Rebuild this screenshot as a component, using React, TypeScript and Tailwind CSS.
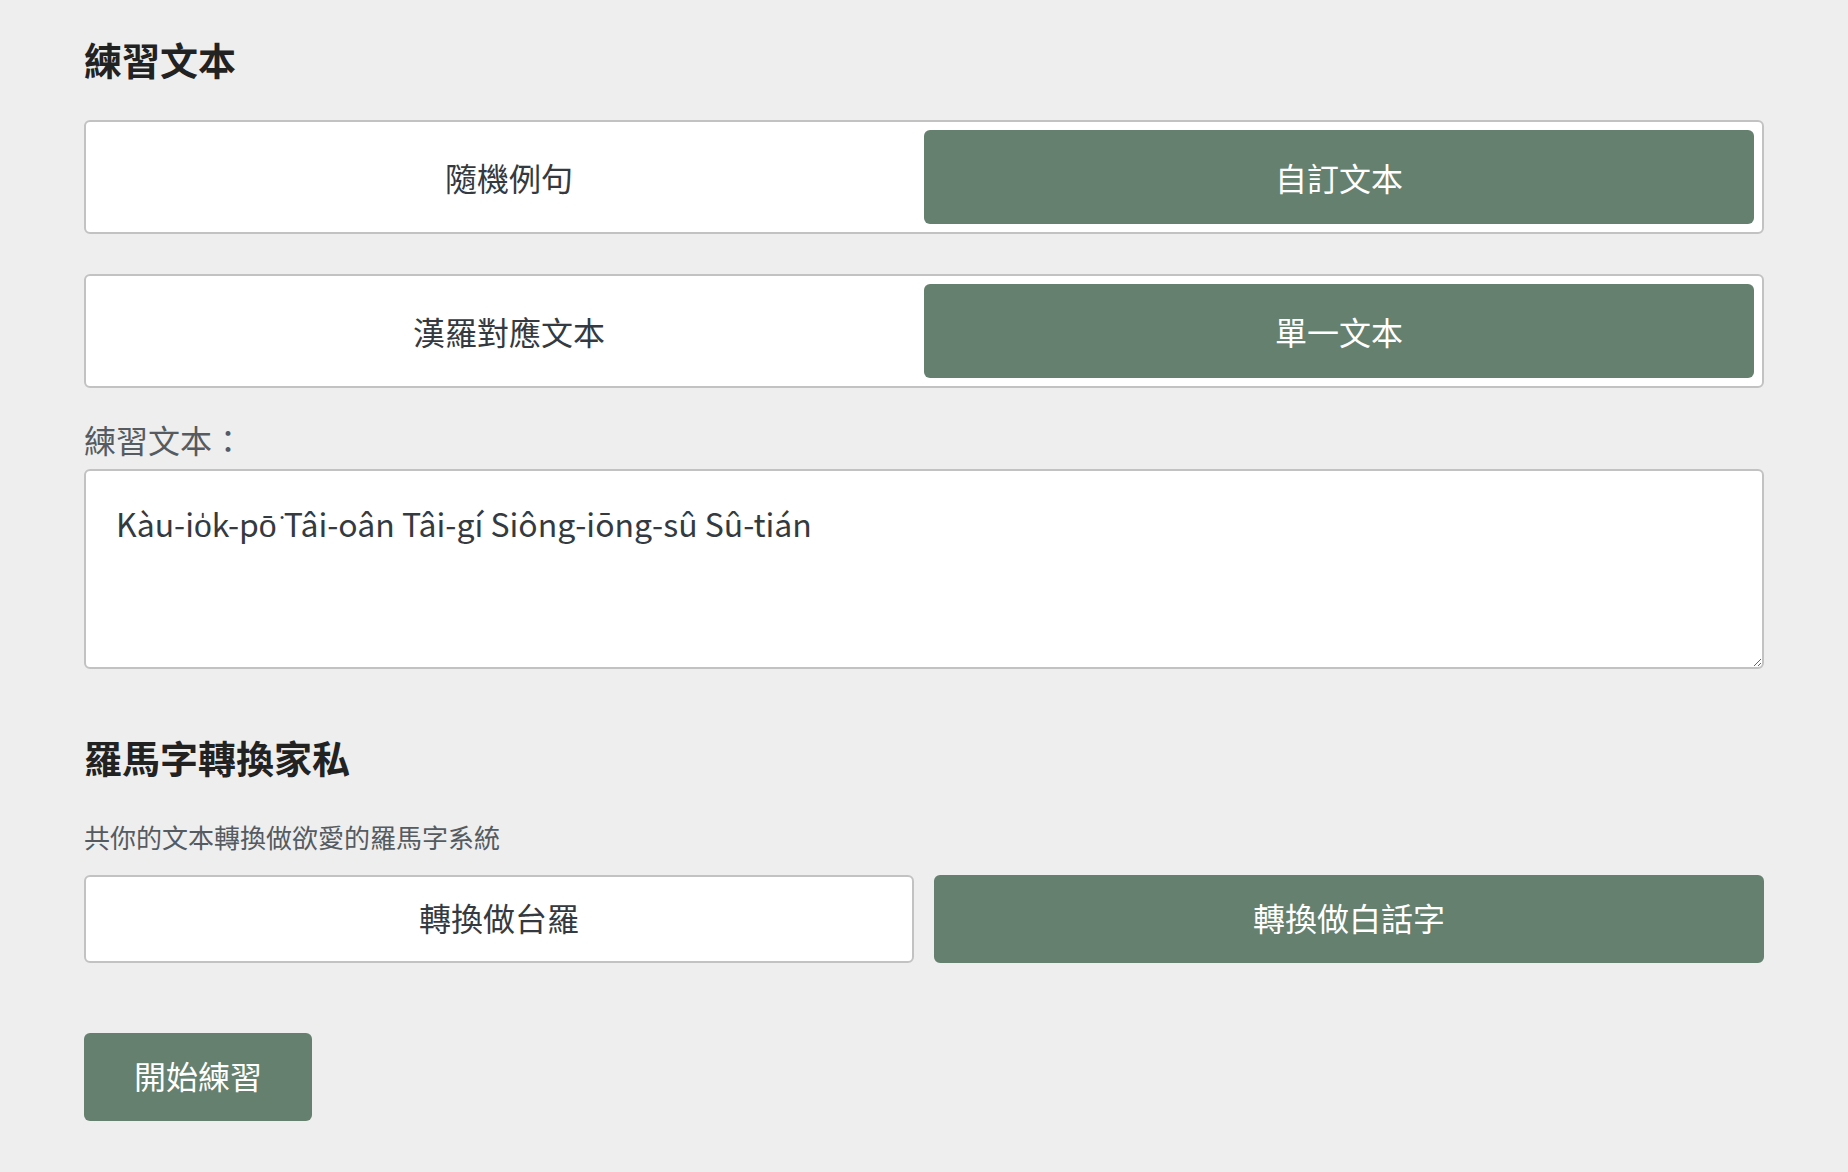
import { useState } from 'react';

const GREEN = 'bg-[#65806f] text-white';
const PLAIN = 'bg-white text-[#343a40]';

function Toggle({
  options,
  value,
  onChange,
}: {
  options: string[];
  value: number;
  onChange: (i: number) => void;
}) {
  return (
    <div className="flex rounded-[6px] border-2 border-[#c2c2c2] bg-white p-2">
      {options.map((label, i) => (
        <button
          key={label}
          type="button"
          onClick={() => onChange(i)}
          className={`flex h-[94px] flex-1 items-center justify-center rounded-[6px] text-[32px] leading-[48px] ${
            value === i ? GREEN : PLAIN
          }`}
        >
          {label}
        </button>
      ))}
    </div>
  );
}

export default function App() {
  const [source, setSource] = useState(1);
  const [mode, setMode] = useState(1);
  const [target, setTarget] = useState(1);

  return (
    <div className="min-h-screen bg-[#eeeeee] font-['Noto_Sans_CJK_TC',sans-serif]">
      <div className="px-[84px] pt-[35px] pb-12">
        <h2 className="text-[38px] leading-[48px] font-bold text-[#222222]">練習文本</h2>

        {/* Text source */}
        <div className="mt-[37px]">
          <Toggle options={['隨機例句', '自訂文本']} value={source} onChange={setSource} />
        </div>

        {/* Text mode */}
        <div className="mt-[40px]">
          <Toggle options={['漢羅對應文本', '單一文本']} value={mode} onChange={setMode} />
        </div>

        <label className="mt-[27px] block text-[32px] leading-[48px] text-[#555b61]">練習文本：</label>
        <textarea
          className="mt-[6px] block h-[200px] w-full rounded-[6px] border-2 border-[#c2c2c2] bg-white px-[30px] pt-[28px] pb-[30px] text-[32px] leading-[48px] text-[#343a40] outline-none"
          defaultValue="Kàu-io̍k-pō͘ Tâi-oân Tâi-gí Siông-iōng-sû Sû-tián"
        />

        <h2 className="mt-[64px] text-[38px] leading-[48px] font-bold text-[#222222]">羅馬字轉換家私</h2>
        <p className="mt-[36px] text-[26px] leading-[39px] text-[#555b61]">共你的文本轉換做欲愛的羅馬字系統</p>

        {/* Romanization target */}
        <div className="mt-[19px] grid grid-cols-2 gap-5">
          {['轉換做台羅', '轉換做白話字'].map((label, i) => (
            <button
              key={label}
              type="button"
              onClick={() => setTarget(i)}
              className={`flex h-[88px] items-center justify-center rounded-[6px] border-2 pb-1 text-[32px] leading-[48px] ${
                target === i ? 'border-[#65806f] bg-[#65806f] text-white' : 'border-[#c2c2c2] bg-white text-[#343a40]'
              }`}
            >
              {label}
            </button>
          ))}
        </div>

        <button
          type="button"
          className="mt-[70px] flex h-[88px] w-[228px] items-center justify-center rounded-[6px] bg-[#65806f] pb-1 text-[32px] leading-[48px] text-white"
        >
          開始練習
        </button>
      </div>
    </div>
  );
}
